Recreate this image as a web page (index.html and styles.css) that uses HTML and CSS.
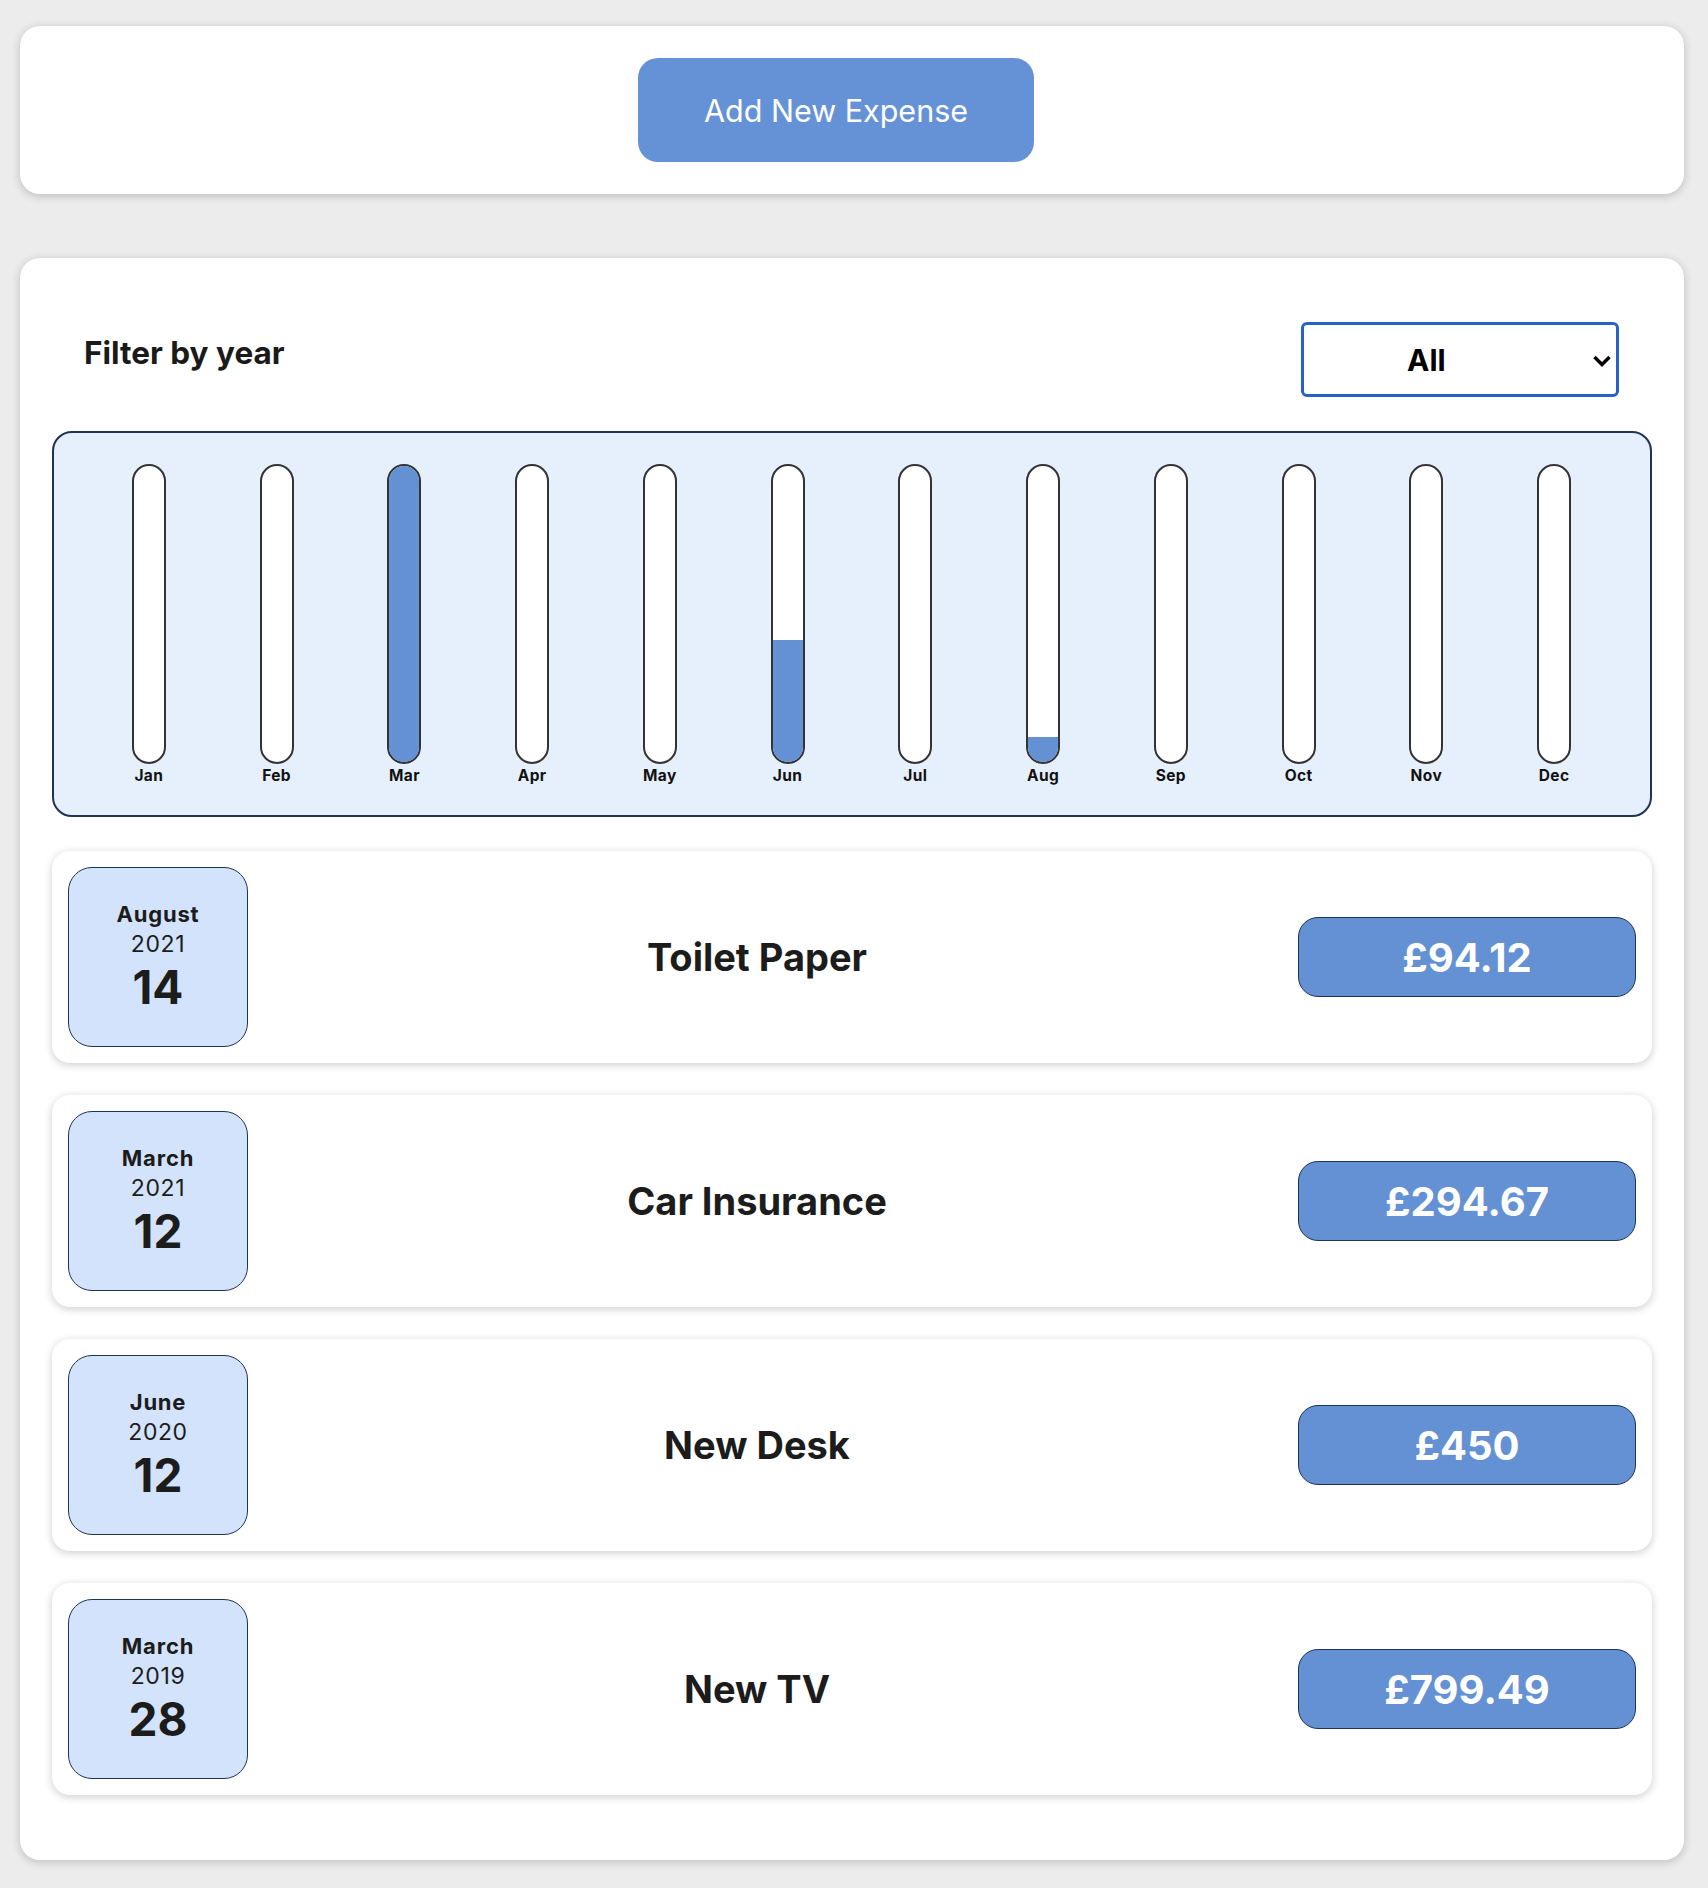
FILE: index.html
```html
<!DOCTYPE html>
<html lang="en">
<head>
<meta charset="utf-8">
<title>Expenses</title>
<link rel="stylesheet" href="styles.css">
</head>
<body>
<main class="app">
  <section class="card new-expense">
    <button class="add-btn" type="button">Add New Expense</button>
  </section>

  <section class="card expenses">
    <div class="filter">
      <label class="filter-label" for="year">Filter by year</label>
      <div class="select-wrap">
        <select id="year" class="filter-select">
          <option>All</option>
          <option>2021</option>
          <option>2020</option>
          <option>2019</option>
        </select>
        <svg class="chevron" width="20" height="14" viewBox="0 0 20 14" aria-hidden="true">
          <polyline points="2.5,3 10,10.5 17.5,3" fill="none" stroke="#000" stroke-width="3.4"/>
        </svg>
      </div>
    </div>

    <div class="chart">
      <div class="chart-col"><div class="bar"><div class="fill" style="height:0%"></div></div><span class="bar-label">Jan</span></div>
      <div class="chart-col"><div class="bar"><div class="fill" style="height:0%"></div></div><span class="bar-label">Feb</span></div>
      <div class="chart-col"><div class="bar"><div class="fill" style="height:100%"></div></div><span class="bar-label">Mar</span></div>
      <div class="chart-col"><div class="bar"><div class="fill" style="height:0%"></div></div><span class="bar-label">Apr</span></div>
      <div class="chart-col"><div class="bar"><div class="fill" style="height:0%"></div></div><span class="bar-label">May</span></div>
      <div class="chart-col"><div class="bar"><div class="fill" style="height:41.1%"></div></div><span class="bar-label">Jun</span></div>
      <div class="chart-col"><div class="bar"><div class="fill" style="height:0%"></div></div><span class="bar-label">Jul</span></div>
      <div class="chart-col"><div class="bar"><div class="fill" style="height:8.6%"></div></div><span class="bar-label">Aug</span></div>
      <div class="chart-col"><div class="bar"><div class="fill" style="height:0%"></div></div><span class="bar-label">Sep</span></div>
      <div class="chart-col"><div class="bar"><div class="fill" style="height:0%"></div></div><span class="bar-label">Oct</span></div>
      <div class="chart-col"><div class="bar"><div class="fill" style="height:0%"></div></div><span class="bar-label">Nov</span></div>
      <div class="chart-col"><div class="bar"><div class="fill" style="height:0%"></div></div><span class="bar-label">Dec</span></div>
    </div>

    <ul class="expense-list">
      <li class="expense-item">
        <div class="date">
          <div class="month">August</div>
          <div class="year">2021</div>
          <div class="day">14</div>
        </div>
        <h2 class="title">Toilet Paper</h2>
        <div class="amount">£94.12</div>
      </li>
      <li class="expense-item">
        <div class="date">
          <div class="month">March</div>
          <div class="year">2021</div>
          <div class="day">12</div>
        </div>
        <h2 class="title">Car Insurance</h2>
        <div class="amount">£294.67</div>
      </li>
      <li class="expense-item">
        <div class="date">
          <div class="month">June</div>
          <div class="year">2020</div>
          <div class="day">12</div>
        </div>
        <h2 class="title">New Desk</h2>
        <div class="amount">£450</div>
      </li>
      <li class="expense-item">
        <div class="date">
          <div class="month">March</div>
          <div class="year">2019</div>
          <div class="day">28</div>
        </div>
        <h2 class="title">New TV</h2>
        <div class="amount">£799.49</div>
      </li>
    </ul>
  </section>
</main>
</body>
</html>
```

FILE: styles.css
```css
* {
  box-sizing: border-box;
}

html, body {
  margin: 0;
  padding: 0;
}

body {
  background: #ececec;
  font-family: Inter, "Noto Sans", "Liberation Sans", sans-serif;
  color: #1c1c1c;
}

.app {
  padding: 26px 24px 30px 20px;
}

.card {
  background: #ffffff;
  border-radius: 20px;
  box-shadow: 0 2px 10px rgba(0, 0, 0, 0.2);
}

.new-expense {
  padding: 32px;
  display: flex;
  justify-content: center;
}

.add-btn {
  width: 396px;
  height: 104px;
  margin-right: 32px;
  border: none;
  border-radius: 20px;
  background: #6592d6;
  color: #ffffff;
  font-family: Inter, "Noto Sans", sans-serif;
  font-size: 30.5px;
  font-weight: 400;
  cursor: pointer;
}

.expenses {
  margin-top: 64px;
  padding: 32px 32px 65px;
}

.filter {
  display: flex;
  justify-content: space-between;
  align-items: flex-start;
  padding: 32px 33px 0 32px;
  margin-bottom: 34px;
}

.filter-label {
  margin-top: 11px;
  font-size: 31.5px;
  font-weight: 700;
  color: #1a1a1a;
  line-height: normal;
}

.select-wrap {
  position: relative;
}

.filter-select {
  display: block;
  width: 318px;
  height: 75px;
  appearance: none;
  -webkit-appearance: none;
  background: #ffffff;
  border: 3.5px solid #2462c8;
  border-radius: 6px;
  padding: 0 0 0 103px;
  font-family: Inter, "Noto Sans", sans-serif;
  font-size: 30px;
  font-weight: 700;
  color: #000000;
  outline: none;
}

.chevron {
  position: absolute;
  left: 291px;
  top: 32px;
  pointer-events: none;
}

.chart {
  display: grid;
  grid-template-columns: repeat(12, 1fr);
  padding: 31px 32px 29px 31px;
  background: #e6f0fd;
  border: 2px solid #1f3354;
  border-radius: 20px;
  margin-bottom: 34px;
}

.chart-col {
  display: flex;
  flex-direction: column;
  align-items: center;
}

.bar {
  width: 34px;
  height: 300px;
  border: 2px solid #333333;
  border-radius: 17px;
  background: #ffffff;
  overflow: hidden;
  display: flex;
  flex-direction: column;
  justify-content: flex-end;
}

.fill {
  width: 100%;
  background: #6391d4;
}

.bar-label {
  margin-top: 2px;
  font-size: 15.5px;
  line-height: 20px;
  font-weight: 700;
  letter-spacing: 0.4px;
  color: #111111;
}

.expense-list {
  list-style: none;
  margin: 0;
  padding: 0;
  display: flex;
  flex-direction: column;
  gap: 32px;
}

.expense-item {
  display: flex;
  align-items: center;
  padding: 16px;
  background: #ffffff;
  border-radius: 18px;
  box-shadow: 0 2px 9px rgba(0, 0, 0, 0.2);
}

.date {
  width: 180px;
  height: 180px;
  flex-shrink: 0;
  display: flex;
  flex-direction: column;
  align-items: center;
  justify-content: center;
  background: #d3e3fb;
  border: 1.5px solid #1f3354;
  border-radius: 24px;
  color: #1c1c1c;
}

.month {
  font-size: 22px;
  font-weight: 700;
  line-height: 30px;
  letter-spacing: 0.8px;
}

.year {
  font-size: 23px;
  font-weight: 400;
  line-height: 30px;
  letter-spacing: 0.6px;
}

.day {
  font-size: 46px;
  font-weight: 700;
  line-height: 56px;
}

.title {
  flex: 1;
  margin: 0 32px 0 0;
  text-align: center;
  font-size: 38px;
  font-weight: 700;
  color: #1c1c1c;
}

.amount {
  width: 338px;
  height: 80px;
  flex-shrink: 0;
  display: flex;
  align-items: center;
  justify-content: center;
  background: #6391d4;
  border: 1.5px solid #1f3354;
  border-radius: 20px;
  color: #ffffff;
  font-size: 40px;
  font-weight: 700;
}
```
